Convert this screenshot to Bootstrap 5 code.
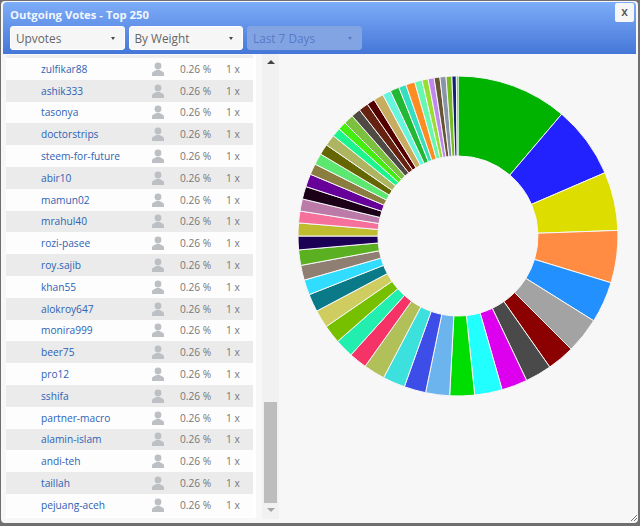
<!DOCTYPE html>
<html lang="en">
<head>
    <meta charset="UTF-8">
    <meta name="viewport" content="width=device-width, initial-scale=1.0">
    <title>Outgoing Votes - Top 250</title>
    <link href="https://cdn.jsdelivr.net/npm/bootstrap@5.3.0/dist/css/bootstrap.min.css" rel="stylesheet">
    <style>
        html, body { height: 526px; overflow: hidden; }
        body { background: #6f6f6f; font-family: "Open Sans", "Liberation Sans", sans-serif; font-size: 10.2px; color: #777; }
        .vote-modal { width: 637px; height: 522px; margin: 1px 0 0 1px; background: #f7f7f7; border-radius: 4px; padding: 1px 2px 0 2px; position: relative; }
        .vote-head { height: 52px; padding: 4px 8px 0 7px; background: linear-gradient(#7dacf8, #4577d8); border-radius: 4px 4px 0 0; position: relative; }
        .vote-title { color: #f2f7ff; font-weight: 700; font-size: 11.3px; line-height: 18px; margin-bottom: 2px; }
        .vote-select { height: 24px; width: 114.5px; padding: 0 5px; background: #f6f6f6; border: 1px solid #fff; border-radius: 3px; font-size: 11.8px; line-height: 20px; color: #666; }
        .vote-select.is-off { background: #83a4e2; border-color: #83a4e2; color: #567ac8; }
        .vote-caret { width: 0; height: 0; border-left: 2.5px solid transparent; border-right: 2.5px solid transparent; border-top: 3px solid #444; }
        .is-off .vote-caret { border-top-color: #567ac8; }
        .vote-close { position: absolute; top: 1px; right: 2px; width: 19px; height: 19px; background: #f6f6f6; border-radius: 2px; color: #555; font-size: 12px; font-weight: 600; line-height: 17px; text-align: center; }
        .vote-list { width: 250px; height: 463px; margin: 1px 0 0 3px; padding-right: 3px; background: #fff; overflow: hidden; }
        .vote-top { height: 3px; background: #eee; }
        .vote-row { height: 21.8px; padding-left: 35px; padding-top: 1px; background: #fdfdfd; }
        .vote-row:nth-child(odd) { background: #ebebeb; }
        .vote-row a { width: 111px; color: #2d62b5; text-decoration: none; }
        .vote-row svg { width: 12px; height: 14px; margin-right: 16px; margin-top: -1px; }
        .vote-pct { width: 46px; }
        .vote-bar { width: 17px; margin-left: 6px; background: #f1f1f1; display: flex; flex-direction: column; align-items: center; height: 465px; padding: 6px 0 7px; }
        .vote-up { border-left: 4px solid transparent; border-right: 4px solid transparent; border-bottom: 4px solid #444; }
        .vote-down { border-left: 4px solid transparent; border-right: 4px solid transparent; border-top: 4px solid #a5a5a5; margin-top: 5px; }
        .vote-thumb { width: 13px; height: 101px; background: #bdbdbd; margin-top: auto; }
        .vote-chart { padding-top: 21px; }
        .vote-grip { position: absolute; right: 1px; bottom: 2px; }
    </style>
</head>
<body>
    <div class="vote-modal">
        <div class="vote-head">
            <div class="vote-title">Outgoing Votes - Top 250</div>
            <div class="d-flex gap-1">
                <div class="vote-select d-flex align-items-center justify-content-between"><span>Upvotes</span><i class="vote-caret me-1"></i></div>
                <div class="vote-select d-flex align-items-center justify-content-between"><span>By Weight</span><i class="vote-caret me-1"></i></div>
                <div class="vote-select is-off d-flex align-items-center justify-content-between"><span>Last 7 Days</span><i class="vote-caret me-1"></i></div>
            </div>
            <div class="vote-close">x</div>
        </div>
        <div class="d-flex">
            <div class="vote-list" id="voteList"><div class="vote-top"></div></div>
            <div class="vote-bar">
                <i class="vote-up"></i>
                <i class="vote-thumb"></i>
                <i class="vote-down"></i>
            </div>
            <div class="vote-chart flex-grow-1 d-flex justify-content-center align-items-start">
                <svg id="voteDonut" width="322" height="322" viewBox="-161 -161 322 322"></svg>
            </div>
        </div>
        <svg class="vote-grip" width="6" height="6" viewBox="0 0 6 6"><path d="M0 6L6 0M3 6L6 3" stroke="#777" stroke-width="1"/></svg>
    </div>
    <script>
        const names = ['zulfikar88', 'ashik333', 'tasonya', 'doctorstrips', 'steem-for-future', 'abir10', 'mamun02', 'mrahul40', 'rozi-pasee', 'roy.sajib', 'khan55', 'alokroy647', 'monira999', 'beer75', 'pro12', 'sshifa', 'partner-macro', 'alamin-islam', 'andi-teh', 'taillah', 'pejuang-aceh'];
        const list = document.getElementById('voteList');
        names.forEach(name => {
            const row = document.createElement('div');
            row.className = 'vote-row d-flex align-items-center';
            row.innerHTML = `
                <a href="#">${name}</a>
                <svg viewBox="0 0 12 14"><circle cx="6" cy="4" r="3.4" fill="#bcc0c4"/><path d="M0 14V11.5C0 9.5 3 9 4.4 8H7.6C9 9 12 9.5 12 11.5V14Z" fill="#bcc0c4"/></svg>
                <span class="vote-pct">0.26 %</span>
                <span>1 x</span>
            `;
            list.appendChild(row);
        });

        // end angle of each slice, clockwise from the top, with its colour
        const slices = [
            [40.4, '#00b300'], [66.7, '#2222ff'], [88, '#dddd00'], [107, '#ff8c42'], [122, '#2390ff'],
            [135, '#a3a3a3'], [145, '#8b0000'], [154.6, '#4a4a4a'], [164, '#dd00ee'], [174, '#22ffff'],
            [183, '#00dd00'], [191.7, '#6cb4ee'], [199.6, '#3d4de8'], [207.7, '#3ce0dc'], [215.5, '#b2c05a'],
            [222, '#f63366'], [228.8, '#22eeb0'], [235.5, '#77c000'], [242, '#cfcc60'], [248.5, '#0a7a88'],
            [254, '#30ddff'], [259.4, '#8f7f72'], [265, '#5ab020'], [270, '#1c0055'], [274.7, '#c0bc30'],
            [279, '#f5709a'], [283.4, '#bb7aa8'], [288, '#1c0018'], [292.7, '#660099'], [296.7, '#8b7d40'],
            [300.8, '#5ce870'], [304.7, '#666600'], [308.8, '#adb560'], [312, '#1cf58c'], [315, '#44ee11'],
            [318.6, '#7cc040'], [322, '#4f4a44'], [325.5, '#662211'], [328.4, '#550000'], [332, '#c8ad60'],
            [335, '#66f5dd'], [338.3, '#22b833'], [341, '#33dfc0'], [344.3, '#ff8c22'], [347, '#66f8b0'],
            [349.2, '#99dd33'], [351.4, '#c088ee'], [353.5, '#665533'], [355.7, '#8a94a8'], [357.8, '#77bb22'],
            [359.4, '#112277'], [360, '#00b300']
        ];
        const pt = (r, a) => {
            const t = a * Math.PI / 180;
            return (r * Math.sin(t)).toFixed(2) + ' ' + (-r * Math.cos(t)).toFixed(2);
        };
        let start = 0;
        let paths = '';
        slices.forEach(([end, colour]) => {
            const big = end - start > 180 ? 1 : 0;
            paths += `<path d="M${pt(160, start)}A160 160 0 ${big} 1 ${pt(160, end)}L${pt(80, end)}A80 80 0 ${big} 0 ${pt(80, start)}Z" fill="${colour}" stroke="#f7f7f7" stroke-width="1"/>`;
            start = end;
        });
        document.getElementById('voteDonut').innerHTML = paths;
    </script>
</body>
</html>
